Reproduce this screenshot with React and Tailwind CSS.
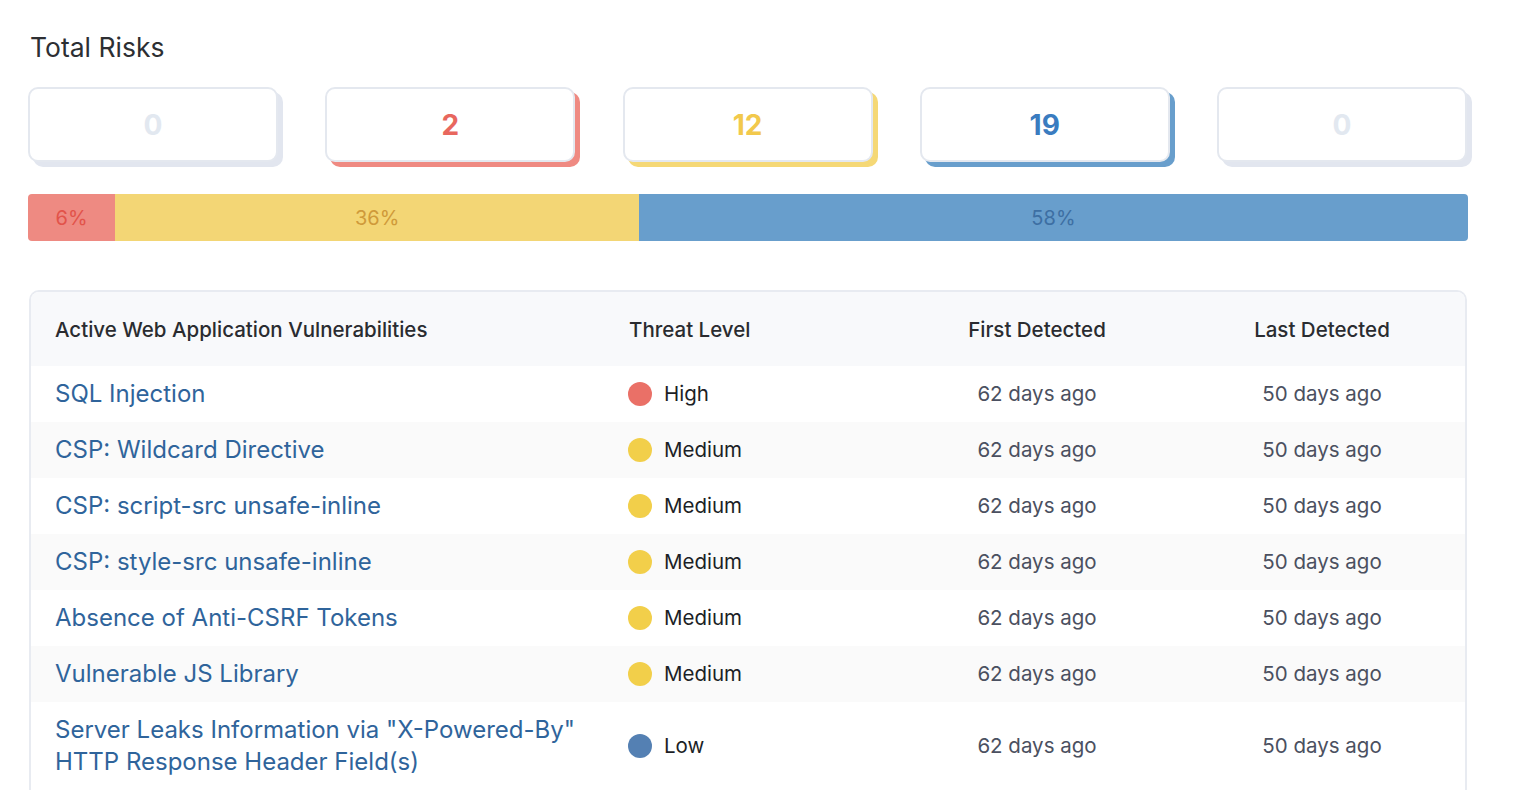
import React from 'react';

const counts = [
  { value: 0, text: 'text-[#e2e8f0]', shadow: 'shadow-[5px_5px_0_#e2e6ef]' },
  { value: 2, text: 'text-[#e8675e]', shadow: 'shadow-[5px_5px_0_#ef8a82]' },
  { value: 12, text: 'text-[#f2c94c]', shadow: 'shadow-[5px_5px_0_#f5d876]' },
  { value: 19, text: 'text-[#3a7cc0]', shadow: 'shadow-[5px_5px_0_#689ecc]' },
  { value: 0, text: 'text-[#e2e8f0]', shadow: 'shadow-[5px_5px_0_#e2e6ef]' },
];

const segments = [
  { label: '6%', share: 2 / 33, bg: 'bg-[#ee8a82]', text: 'text-[#e2534a]' },
  { label: '36%', share: 12 / 33, bg: 'bg-[#f3d675]', text: 'text-[#cf9a3a]' },
  { label: '58%', share: 19 / 33, bg: 'bg-[#689ecc]', text: 'text-[#3d6fa3]' },
];

const levels = {
  High: 'bg-[#ea7067]',
  Medium: 'bg-[#f2cf4a]',
  Low: 'bg-[#5480b3]',
};

const rows = [
  { name: 'SQL Injection', level: 'High' },
  { name: 'CSP: Wildcard Directive', level: 'Medium' },
  { name: 'CSP: script-src unsafe-inline', level: 'Medium' },
  { name: 'CSP: style-src unsafe-inline', level: 'Medium' },
  { name: 'Absence of Anti-CSRF Tokens', level: 'Medium' },
  { name: 'Vulnerable JS Library', level: 'Medium' },
  { name: 'Server Leaks Information via "X-Powered-By" HTTP Response Header Field(s)', level: 'Low' },
];

const App = () => {
  return (
    <div className="min-h-screen bg-white px-[28px] pt-[28px] font-['Inter',sans-serif] w-[1496px]">
      <h2 className="text-[26.5px] leading-9 text-[#2d2f33] pl-[2px] pt-[1px]">Total Risks</h2>

      <div className="flex justify-between mt-[22px] pr-[1px]">
        {counts.map((c, i) => (
          <div
            key={i}
            className={`w-[250px] h-[75px] rounded-[10px] border-2 border-[#e4e8ef] bg-white flex items-center justify-center ${c.shadow}`}
          >
            <span className={`text-[28px] font-bold ${c.text}`}>{c.value}</span>
          </div>
        ))}
      </div>

      <div className="flex mt-[32px] h-[47px] w-[1440px] rounded-[4px] overflow-hidden">
        {segments.map((s) => (
          <div
            key={s.label}
            className={`flex items-center justify-center text-[20px] ${s.bg} ${s.text}`}
            style={{ width: `${s.share * 100}%` }}
          >
            {s.label}
          </div>
        ))}
      </div>

      <div className="mt-[49px] ml-[1px] w-[1438px] rounded-t-[10px] border-2 border-b-0 border-[#e8ebf1] overflow-hidden">
        <div className="grid grid-cols-[574px_290px_284px_1fr] h-[74px] pt-[3px] items-center bg-[#f8f9fb] text-[20.5px] font-medium text-[#2a2c30]">
          <div className="pl-[24px]">Active Web Application Vulnerabilities</div>
          <div className="pl-[24px]">Threat Level</div>
          <div className="text-center">First Detected</div>
          <div className="text-center">Last Detected</div>
        </div>
        {rows.map((r, i) => (
          <div
            key={r.name}
            className={`grid grid-cols-[574px_290px_284px_1fr] items-center min-h-[56px] ${i % 2 === 1 ? 'bg-[#fafafa]' : 'bg-white'} ${i === rows.length - 1 ? 'py-[12px]' : ''}`}
          >
            <div className="pl-[24px] pr-[20px] text-[24px] leading-8 text-[#2f649b]">{r.name}</div>
            <div className="pl-[23px] flex items-center gap-[12px]">
              <span className={`w-[24px] h-[24px] rounded-full ${levels[r.level]}`} />
              <span className="text-[20.5px] text-[#1c1f26]">{r.level}</span>
            </div>
            <div className="text-center text-[20.5px] text-[#4b5060]">62 days ago</div>
            <div className="text-center text-[20.5px] text-[#4b5060]">50 days ago</div>
          </div>
        ))}
      </div>
    </div>
  );
};

export default App;
